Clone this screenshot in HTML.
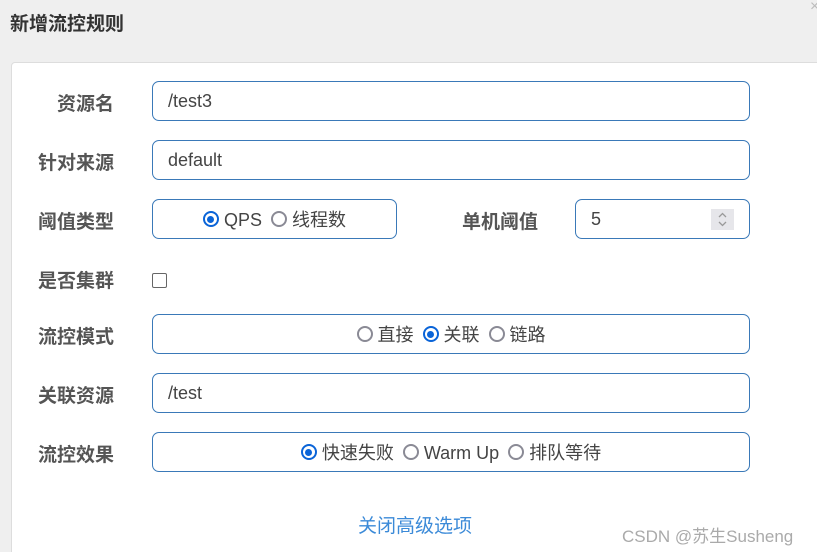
<!DOCTYPE html>
<html style="width:817px;height:552px;overflow:hidden"><head><meta charset="utf-8"><style>
body{margin:0;width:817px;height:552px;background:#efefef;position:relative;overflow:hidden;font-family:"Liberation Sans","Noto Sans CJK SC",sans-serif;}
.title{position:absolute;left:10px;top:9px;font-size:19px;font-weight:bold;color:#333;}
.x{position:absolute;left:810px;top:-2px;color:#bbb;font-size:16px;}
.card{position:absolute;left:11px;top:62px;width:830px;height:500px;background:#fff;border:1px solid #ddd;border-radius:4px;}
.lbl{position:absolute;font-size:19px;font-weight:bold;color:#555;text-align:right;width:110px;left:4px;line-height:42px;}
.in{position:absolute;box-sizing:border-box;height:40px;border:1px solid #3a79b8;border-radius:7px;font-size:18px;color:#444;line-height:38px;padding-left:15px;background:#fff;}
.rg{text-align:center;padding-left:0;font-size:18px;color:#444;line-height:40px;}
.r{display:inline-block;width:12px;height:12px;border:2px solid #8a8a95;border-radius:50%;vertical-align:-1px;margin-right:5px;box-sizing:content-box;}
.r.on{border:2px solid #0a64d8;position:relative;}
.r.on:after{content:"";position:absolute;left:2.5px;top:2.5px;width:7px;height:7px;border-radius:50%;background:#0a64d8;}
.g{margin-left:9px;}
</style></head><body>
<div class="title">新增流控规则</div>
<div class="x">×</div>
<div class="card"></div>
<div class="lbl" style="top:84px">资源名</div>
<div class="in" style="left:152px;top:81px;width:598px">/test3</div>
<div class="lbl" style="top:143px">针对来源</div>
<div class="in" style="left:152px;top:140px;width:598px">default</div>
<div class="lbl" style="top:202px">阈值类型</div>
<div class="in rg" style="left:152px;top:199px;width:245px"><span class="r on"></span>QPS<span class="g"></span><span class="r"></span>线程数</div>
<div class="lbl" style="top:202px;left:428px">单机阈值</div>
<div class="in" style="left:575px;top:199px;width:175px">5<svg style="position:absolute;right:15px;top:9px" width="23" height="21" viewBox="0 0 23 21"><rect width="23" height="21" fill="#e6e6ea"/><path d="M8 8l3.5-3.5L15 8M8 13l3.5 3.5L15 13" stroke="#999" fill="none" stroke-width="1.3"/></svg></div>
<div class="lbl" style="top:261px">是否集群</div>
<div style="position:absolute;left:152px;top:273px;width:13px;height:13px;border:1.5px solid #666;border-radius:2px"></div>
<div class="lbl" style="top:317px">流控模式</div>
<div class="in rg" style="left:152px;top:314px;width:598px"><span class="r"></span>直接<span class="g"></span><span class="r on"></span>关联<span class="g"></span><span class="r"></span>链路</div>
<div class="lbl" style="top:376px">关联资源</div>
<div class="in" style="left:152px;top:373px;width:598px">/test</div>
<div class="lbl" style="top:435px">流控效果</div>
<div class="in rg" style="left:152px;top:432px;width:598px"><span class="r on"></span>快速失败<span class="g"></span><span class="r"></span>Warm Up<span class="g"></span><span class="r"></span>排队等待</div>
<div style="position:absolute;left:358px;top:511px;font-size:19px;color:#3b8ad8">关闭高级选项</div>
<div style="position:absolute;left:622px;top:522px;font-size:17px;color:#aaa">CSDN @苏生Susheng</div>
</body></html>
